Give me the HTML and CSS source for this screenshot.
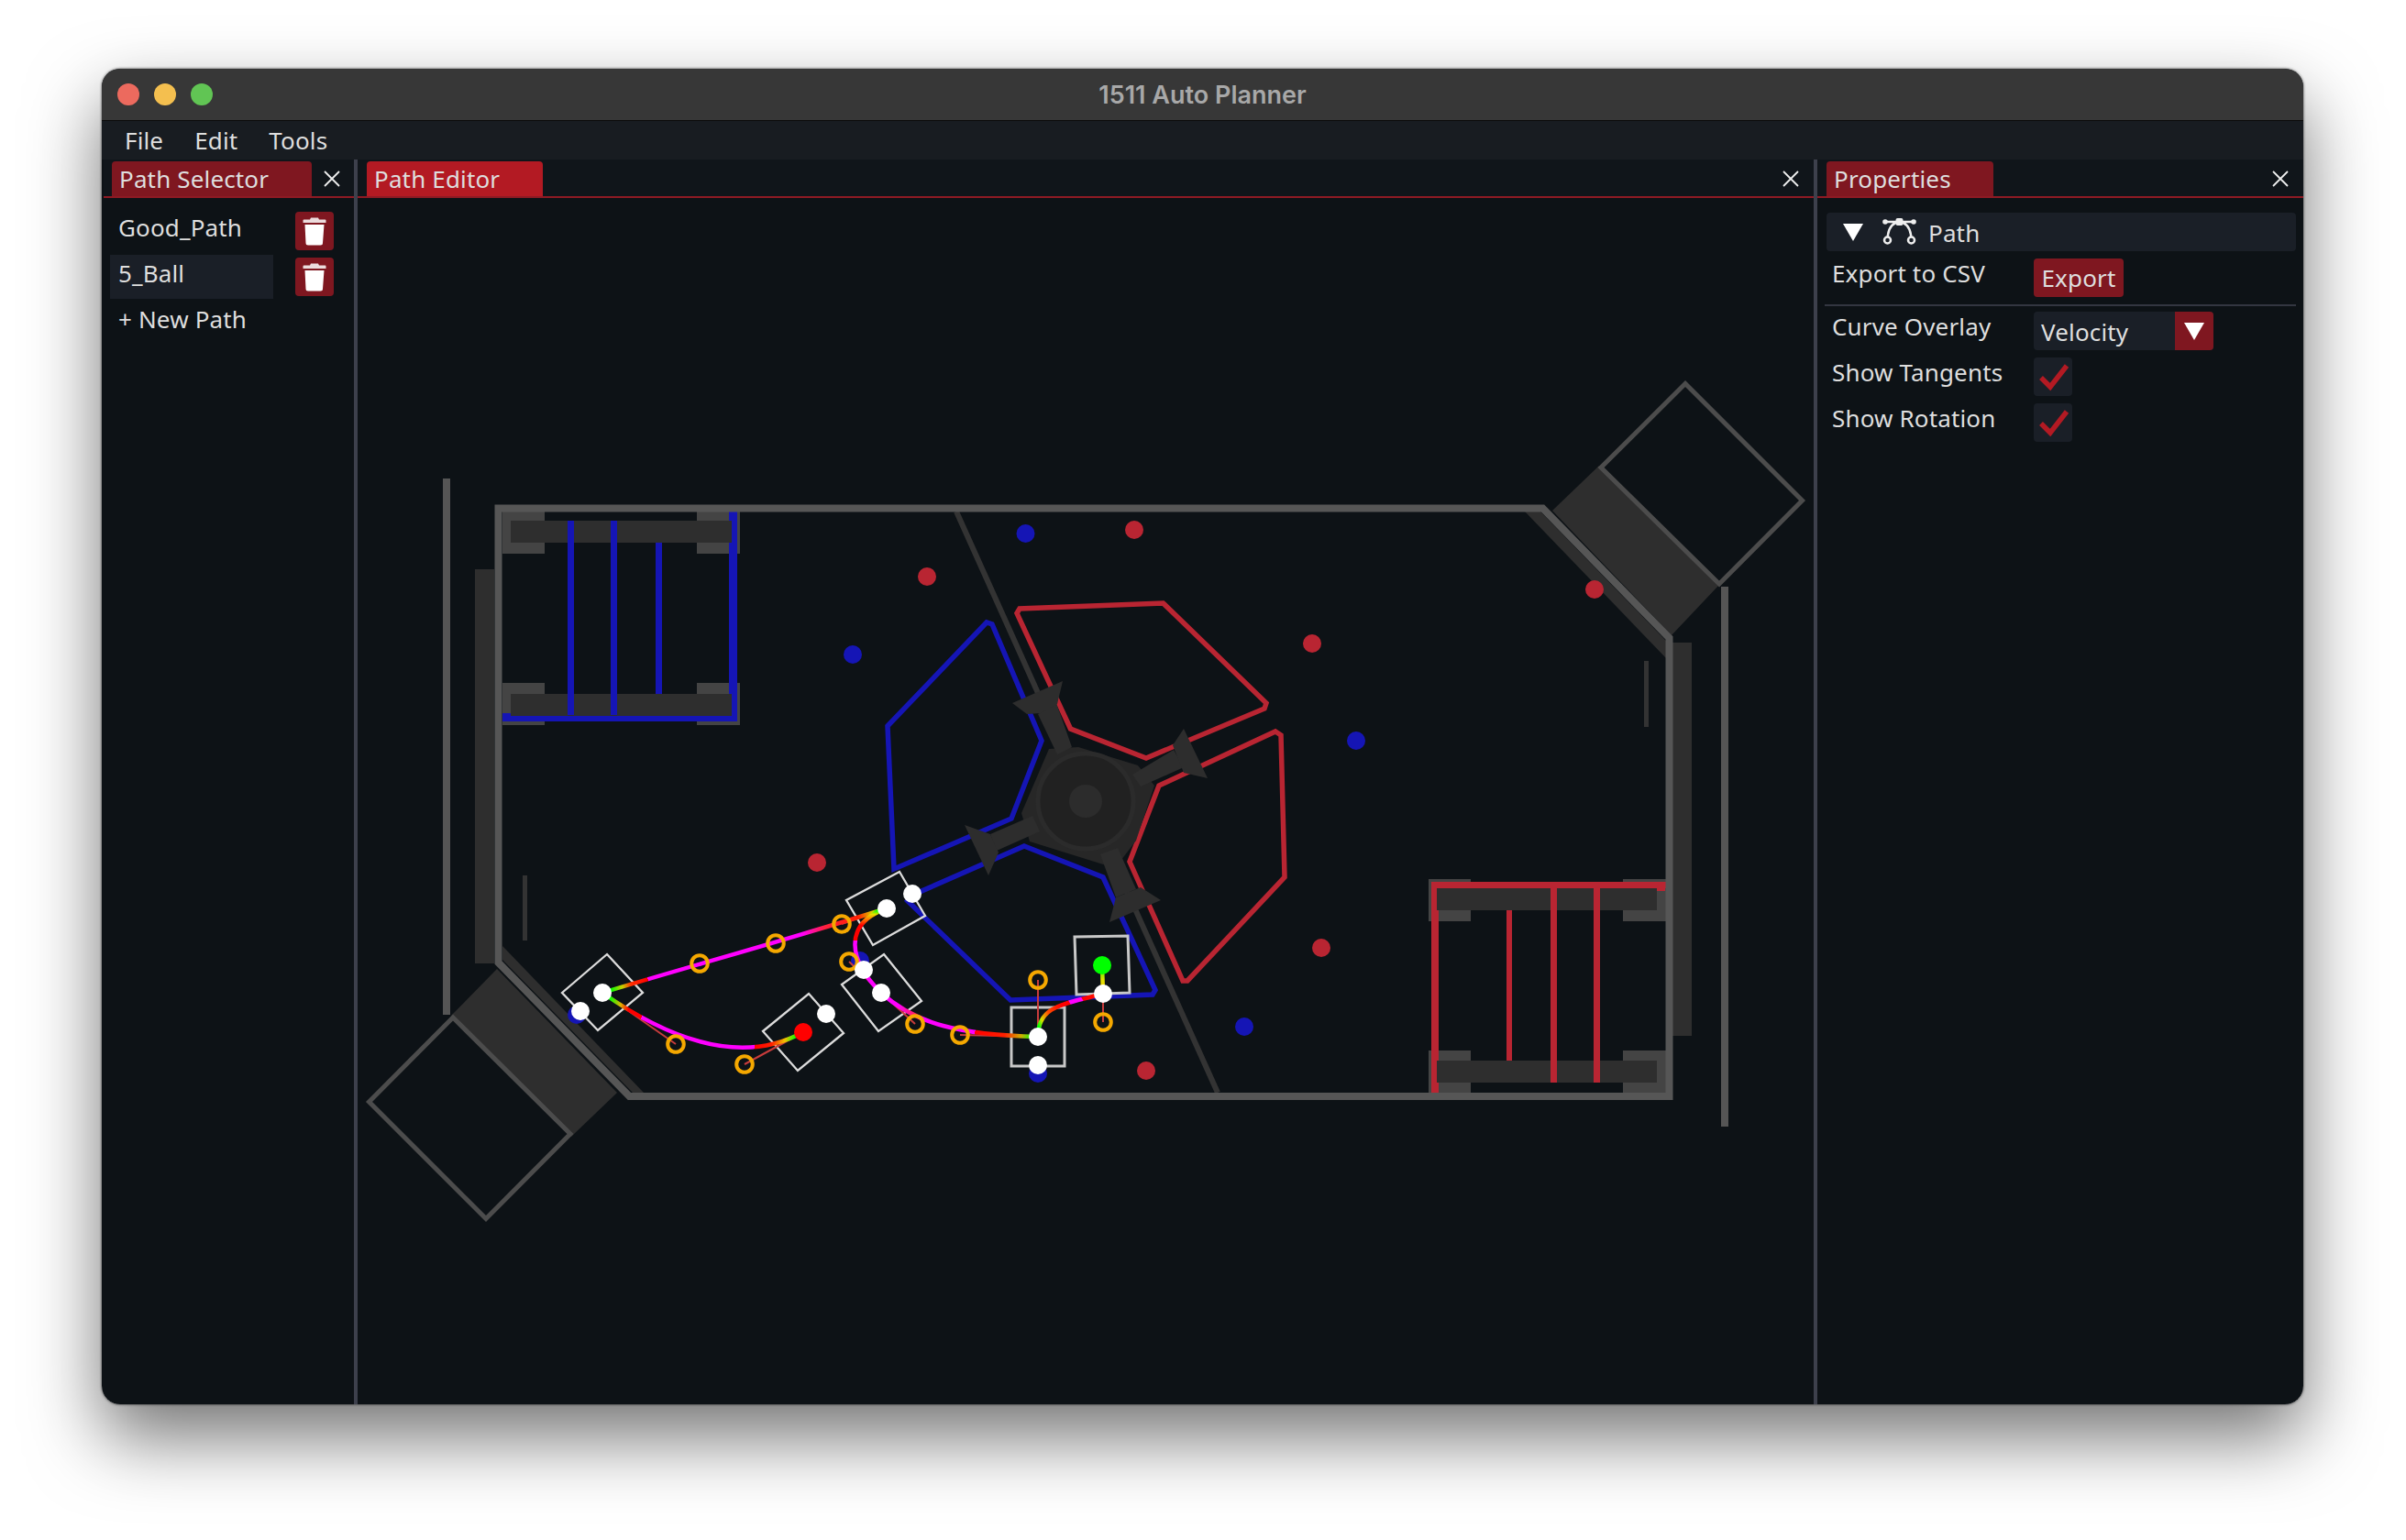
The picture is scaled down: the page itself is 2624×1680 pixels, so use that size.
FILE: index.html
```html
<!DOCTYPE html>
<html>
<head>
	<title>1511 Auto Planner</title>
	<link rel="stylesheet" href="styles.css">
</head>
<body>
<div class="window">
	<div class="titlebar">
		<span class="light light_red"></span>
		<span class="light light_yellow"></span>
		<span class="light light_green"></span>
		<span class="window_title">1511 Auto Planner</span>
	</div>
	<div class="menubar">
		<span class="menu_item">File</span>
		<span class="menu_item">Edit</span>
		<span class="menu_item">Tools</span>
	</div>
	<div class="dock">
		<div class="panel panel_left">
			<div class="tabbar tabbar_left">
				<div class="tab tab_dim tab_selector">Path Selector</div>
				<svg class="close" viewBox="0 0 18 18"><path d="M1 1L17 17M17 1L1 17"/></svg>
			</div>
			<div class="path_list">
				<div class="path_row">
					<div class="path_name">Good_Path</div>
					<button class="trash">
						<svg viewBox="0 0 26 32"><path class="trash_lid" d="M9 1.5h8l1 2h6.5a1 1 0 0 1 1 1v2.5h-25v-2.5a1 1 0 0 1 1-1h6.5z"/><path d="M2.5 9h21l-1.500 20a2.5 2.5 0 0 1-2.5 2.5h-13.5a2.5 2.5 0 0 1-2.5-2.5z"/></svg>
					</button>
				</div>
				<div class="path_row">
					<div class="path_name path_name_active">5_Ball</div>
					<button class="trash">
						<svg viewBox="0 0 26 32"><path class="trash_lid" d="M9 1.5h8l1 2h6.5a1 1 0 0 1 1 1v2.5h-25v-2.5a1 1 0 0 1 1-1h6.5z"/><path d="M2.5 9h21l-1.500 20a2.5 2.5 0 0 1-2.5 2.5h-13.5a2.5 2.5 0 0 1-2.5-2.5z"/></svg>
					</button>
				</div>
				<div class="path_row">
					<div class="path_name">+ New Path</div>
				</div>
			</div>
		</div>
		<div class="splitter"></div>
		<div class="panel panel_center">
			<div class="tabbar tabbar_center">
				<div class="tab tab_active tab_editor">Path Editor</div>
				<svg class="close" viewBox="0 0 18 18"><path d="M1 1L17 17M17 1L1 17"/></svg>
			</div>
			<svg class="field" viewBox="390 216 1588 1316" width="1588" height="1316">
				<defs>
					<linearGradient id="grad_a" gradientUnits="userSpaceOnUse" x1="657" y1="1083" x2="967" y2="991">
						<stop offset="0.03" stop-color="#00ff00"/><stop offset="0.07" stop-color="#c8d000"/><stop offset="0.10" stop-color="#ff3000"/><stop offset="0.16" stop-color="#ff0000"/><stop offset="0.16" stop-color="#ff00ff"/>
						<stop offset="0.70" stop-color="#ff00ff"/><stop offset="0.78" stop-color="#ff2040"/><stop offset="0.90" stop-color="#ff2000"/><stop offset="0.95" stop-color="#e0d000"/><stop offset="0.98" stop-color="#00ff00"/>
					</linearGradient>
					<linearGradient id="grad_b" gradientUnits="userSpaceOnUse" x1="657" y1="1083" x2="876" y2="1126">
						<stop offset="0.04" stop-color="#00ff00"/><stop offset="0.10" stop-color="#e0b000"/><stop offset="0.14" stop-color="#ff0000"/><stop offset="0.21" stop-color="#ff0000"/><stop offset="0.21" stop-color="#ff00ff"/>
						<stop offset="0.78" stop-color="#ff00ff"/><stop offset="0.78" stop-color="#ff0000"/><stop offset="0.86" stop-color="#ff2000"/><stop offset="0.92" stop-color="#f0c000"/><stop offset="0.97" stop-color="#00ff00"/>
					</linearGradient>
					<linearGradient id="grad_c" gradientUnits="userSpaceOnUse" x1="967" y1="991" x2="961" y2="1083">
						<stop offset="0.03" stop-color="#00ff00"/><stop offset="0.08" stop-color="#e8e000"/><stop offset="0.14" stop-color="#ff8000"/><stop offset="0.22" stop-color="#ff0000"/><stop offset="0.40" stop-color="#ff0000"/><stop offset="0.40" stop-color="#ff00ff"/>
						<stop offset="1" stop-color="#ff00ff"/>
					</linearGradient>
					<linearGradient id="grad_d" gradientUnits="userSpaceOnUse" x1="961" y1="1083" x2="1132" y2="1131">
						<stop offset="0.12" stop-color="#ff00ff"/><stop offset="0.24" stop-color="#ff2060"/><stop offset="0.30" stop-color="#ff00ff"/>
						<stop offset="0.62" stop-color="#ff00ff"/><stop offset="0.62" stop-color="#ff0000"/><stop offset="0.80" stop-color="#ff2000"/><stop offset="0.90" stop-color="#d0b000"/><stop offset="0.97" stop-color="#00ff00"/>
					</linearGradient>
					<linearGradient id="grad_e" gradientUnits="userSpaceOnUse" x1="1132" y1="1125" x2="1203" y2="1084">
						<stop offset="0.04" stop-color="#00ff00"/><stop offset="0.12" stop-color="#d8e000"/><stop offset="0.24" stop-color="#ff5000"/><stop offset="0.44" stop-color="#ff0000"/><stop offset="0.55" stop-color="#ff0000"/><stop offset="0.56" stop-color="#ff00ff"/>
						<stop offset="0.72" stop-color="#ff00ff"/><stop offset="0.73" stop-color="#ff0000"/><stop offset="0.90" stop-color="#ff1000"/><stop offset="1" stop-color="#f0c000"/>
					</linearGradient>
					<linearGradient id="grad_f" gradientUnits="userSpaceOnUse" x1="1203" y1="1084" x2="1202" y2="1053">
						<stop offset="0" stop-color="#ffd000"/><stop offset="0.5" stop-color="#e0e000"/><stop offset="1" stop-color="#00ff00"/>
					</linearGradient>
				</defs>

				<!-- field -->
				<g class="fill_dark">
					<rect x="518" y="621" width="21" height="430"/>
					<rect x="1824" y="701" width="21" height="429"/>
					<polygon points="1663,558 1680,558 1817,699 1817,718"/>
					<polygon points="548,1032 548,1047 690,1192 702,1192"/>
					<polygon points="1744,508 1875,638 1823,693 1693,557"/>
					<polygon points="542,1057 673,1192 623,1240 492,1108"/>
				</g>
				<g class="fill_wall">
					<rect x="483" y="522" width="8" height="585"/>
					<rect x="1877" y="640" width="8" height="589"/>
				</g>
				<g class="fill_thin">
					<rect x="1793" y="721" width="5" height="72"/>
					<rect x="570" y="955" width="5" height="71"/>
				</g>
				<polygon class="zone" points="1746,510 1838,418.5 1965.5,546 1875,637"/>
				<polygon class="zone" points="494,1110 402.5,1202 530,1329.5 622,1237"/>
				<line class="divider" x1="1043" y1="558" x2="1328" y2="1192"/>

				<!-- blue hangar -->
				<g class="fill_block">
					<rect x="548" y="558" width="46" height="46"/>
					<rect x="760" y="558" width="47" height="46"/>
					<rect x="548" y="745" width="46" height="46"/>
					<rect x="760" y="745" width="47" height="46"/>
				</g>
				<rect class="fill_blue" x="715" y="592" width="7" height="165"/>
				<rect class="fill_blue" x="795" y="558" width="9" height="229"/>
				<rect class="fill_blue" x="548" y="781" width="256" height="6"/>
				<rect class="fill_blue" x="548" y="778" width="9" height="9"/>
				<g class="fill_dark">
					<rect x="557" y="568" width="241" height="24"/>
					<rect x="557" y="757" width="241" height="24"/>
				</g>
				<rect class="fill_blue" x="619" y="568" width="7" height="212"/>
				<rect class="fill_blue" x="666" y="568" width="7" height="212"/>

				<!-- red hangar -->
				<g class="fill_block">
					<rect x="1558" y="959" width="46" height="46"/>
					<rect x="1770" y="959" width="47" height="46"/>
					<rect x="1558" y="1146" width="46" height="46"/>
					<rect x="1770" y="1146" width="47" height="46"/>
				</g>
				<rect class="fill_red" x="1643" y="993" width="6" height="164"/>
				<rect class="fill_red" x="1561" y="962" width="256" height="7"/>
				<rect class="fill_red" x="1561" y="962" width="8" height="230"/>
				<rect class="fill_red" x="1807" y="962" width="9" height="10"/>
				<g class="fill_dark">
					<rect x="1567" y="969" width="240" height="24"/>
					<rect x="1567" y="1157" width="240" height="24"/>
				</g>
				<rect class="fill_red" x="1691" y="969" width="7" height="212"/>
				<rect class="fill_red" x="1738" y="969" width="7" height="212"/>

				<!-- wall goes over the hangars -->
				<polygon class="wall" points="543.5,554.5 1682.5,554.5 1820.5,696 1820.5,1196 686.5,1196 543.5,1050"/>

				<!-- tarmacs -->
				<polygon class="tarmac_blue" points="968,792 1076,679 1082,681 1136,808 1103,893 975,948"/>
				<polygon class="tarmac_blue" points="1117,923 1203,957 1260,1080 1257,1085 1102,1091 990,983 1003,973"/>
				<polygon class="tarmac_red" points="1112,664 1109,669 1167.5,795 1250,827 1379,773 1381,767 1268.5,658"/>
				<polygon class="tarmac_red" points="1391,798 1397,802 1401,957 1295,1070 1290,1070 1232,940 1264,857"/>

				<!-- hub -->
				<polygon class="hub_back" points="1144,817 1176,815 1241,835 1259,857 1239,917 1216,947 1123,918 1114,887"/>
				<g class="fill_arm">
					<polygon points="1132,779 1152,767 1169,815 1153,823"/>
					<polygon points="1280,818 1291,837 1244,858 1235,845"/>
					<polygon points="1080,910 1087,928 1134,907 1126,890"/>
					<polygon points="1217,979 1239,970 1219,925 1200,932"/>
					<polygon points="1104,767 1159,743 1153,768 1135,778 1120,779"/>
					<polygon points="1291,795 1317,849 1291,843 1279,813"/>
					<polygon points="1052,900 1078,955 1089,930 1080,910"/>
					<polygon points="1210,1006 1266,982 1244,968 1217,979"/>
				</g>
				<circle class="hub_ring" cx="1184" cy="874" r="52"/>
				<circle class="hub_cap" cx="1184" cy="874" r="18"/>

				<!-- balls -->
				<g class="fill_blue">
					<circle cx="1118.5" cy="582" r="10"/>
					<circle cx="930" cy="714" r="10"/>
					<circle cx="1479" cy="808" r="10"/>
					<circle cx="1357" cy="1120" r="10"/>
					<circle cx="629" cy="1107" r="10"/>
					<circle cx="1132" cy="1171" r="10"/>
					<circle cx="938" cy="1048" r="10"/>
				</g>
				<g class="fill_red">
					<circle cx="1237" cy="578" r="10"/>
					<circle cx="1011" cy="629" r="10"/>
					<circle cx="1431" cy="702" r="10"/>
					<circle cx="891" cy="941" r="10"/>
					<circle cx="1739" cy="643" r="10"/>
					<circle cx="1250" cy="1168" r="10"/>
					<circle cx="1441" cy="1034" r="10"/>
				</g>

				<!-- robot outlines -->
				<g class="robot">
					<polygon points="662,1041 701,1083 652,1124 613,1083"/>
					<polygon points="882,1084 920,1127 870,1168 832,1125"/>
					<polygon points="981,951 1009,999 952,1031 923,982"/>
					<polygon points="964,1041 1005,1092 958,1125 918,1074"/>
					<polygon class="robot_thick" points="1103,1099 1161,1099 1161,1163 1103,1163"/>
					<polygon class="robot_thick" points="1172,1022 1230,1021 1232,1083 1174,1085"/>
				</g>

				<!-- tangents -->
				<g class="tangent">
					<line x1="657" y1="1083" x2="763" y2="1051"/>
					<line x1="657" y1="1083" x2="737" y2="1139"/>
					<line x1="876" y1="1126" x2="812" y2="1161"/>
					<line x1="967" y1="991" x2="918" y2="1008"/>
					<line x1="961" y1="1083" x2="926" y2="1049"/>
					<line x1="961" y1="1083" x2="998" y2="1117"/>
					<line x1="1132" y1="1131" x2="1047" y2="1129"/>
					<line x1="1132" y1="1131" x2="1132" y2="1069"/>
					<line x1="1203" y1="1084" x2="1203" y2="1115"/>
				</g>

				<!-- path -->
				<g class="curve">
					<path stroke="url(#grad_a)" d="M657 1083C763 1051 846 1029 967 991"/>
					<path stroke="url(#grad_b)" d="M657 1083C737 1139 812 1161 876 1126"/>
					<path stroke="url(#grad_c)" d="M967 991C918 1008 926 1049 961 1083"/>
					<path stroke="url(#grad_d)" d="M961 1083C998 1117 1047 1129 1132 1131"/>
					<path stroke="url(#grad_e)" d="M1132 1131C1132 1095 1165 1095 1203 1084"/>
					<path stroke="url(#grad_f)" d="M1203 1084L1202 1053"/>
				</g>

				<!-- control points -->
				<g class="handle">
					<circle cx="763" cy="1051" r="8.8"/>
					<circle cx="846" cy="1029" r="8.8"/>
					<circle cx="918" cy="1008" r="8.8"/>
					<circle cx="737" cy="1139" r="8.8"/>
					<circle cx="812" cy="1161" r="8.8"/>
					<circle cx="926" cy="1049" r="8.8"/>
					<circle cx="998" cy="1117" r="8.8"/>
					<circle cx="1047" cy="1129" r="8.8"/>
					<circle cx="1132" cy="1069" r="8.8"/>
					<circle cx="1203" cy="1115" r="8.8"/>
				</g>
				<g class="point">
					<circle cx="657" cy="1083" r="10"/>
					<circle cx="633" cy="1103" r="10"/>
					<circle cx="901" cy="1106" r="10"/>
					<circle cx="967" cy="991" r="10"/>
					<circle cx="995" cy="975" r="10"/>
					<circle cx="961" cy="1083" r="10"/>
					<circle cx="942" cy="1058" r="10"/>
					<circle cx="1132" cy="1131" r="10"/>
					<circle cx="1132" cy="1162" r="10"/>
					<circle cx="1203" cy="1084" r="10"/>
				</g>
				<circle class="point_start" cx="876" cy="1126" r="10"/>
				<circle class="point_end" cx="1202" cy="1053" r="10"/>
			</svg>
		</div>
		<div class="splitter"></div>
		<div class="panel panel_right">
			<div class="tabbar">
				<div class="tab tab_dim tab_properties">Properties</div>
				<svg class="close" viewBox="0 0 18 18"><path d="M1 1L17 17M17 1L1 17"/></svg>
			</div>
			<div class="props">
				<div class="prop_header">
					<svg class="arrow arrow_header" viewBox="0 0 22 19"><path d="M0 0H22L11 19z"/></svg>
					<svg class="bezier" viewBox="0 0 37 30">
						<path class="bezier_line" d="M3 5H34M18.5 5C10 6 6 13 5.5 24M18.5 5C27 6 31 13 31.5 24"/>
						<rect x="14.5" y="1" width="8" height="8" rx="2"/>
						<circle cx="3" cy="5" r="2.8"/>
						<circle cx="34" cy="5" r="2.8"/>
						<circle class="bezier_ring" cx="5.5" cy="25" r="3.5"/>
						<circle class="bezier_ring" cx="31.5" cy="25" r="3.5"/>
					</svg>
					<span class="prop_header_text">Path</span>
				</div>
				<div class="prop_row prop_row_export">
					<span class="prop_label">Export to CSV</span>
					<button class="export">Export</button>
				</div>
				<div class="separator"></div>
				<div class="prop_row">
					<span class="prop_label">Curve Overlay</span>
					<div class="combo">
						<span class="combo_text">Velocity</span>
						<span class="combo_button"><svg class="arrow" viewBox="0 0 22 19"><path d="M0 0H22L11 19z"/></svg></span>
					</div>
				</div>
				<div class="prop_row">
					<span class="prop_label">Show Tangents</span>
					<div class="checkbox"><svg viewBox="0 0 42 42"><path d="M8 22L18 32L36 9"/></svg></div>
				</div>
				<div class="prop_row">
					<span class="prop_label">Show Rotation</span>
					<div class="checkbox"><svg viewBox="0 0 42 42"><path d="M8 22L18 32L36 9"/></svg></div>
				</div>
			</div>
		</div>
	</div>
</div>
</body>
</html>
```

FILE: styles.css
```css
body {
	margin: 0;
	background-color: #fff;
	font-family: "Noto Sans", sans-serif;
	font-size: 26px;
	letter-spacing: 0.15px;
	color: #dedede;
}
.window {
	position: relative;
	box-sizing: border-box;
	margin: 75px 0 0 111px;
	width: 2401px;
	height: 1457px;
	border-radius: 20px;
	overflow: hidden;
	display: flex;
	flex-direction: column;
	background-color: #0d1216;
}
body::before {
	content: "";
	position: absolute;
	left: 111px;
	top: 75px;
	width: 2401px;
	height: 1457px;
	border-radius: 20px;
	box-shadow: 0 36px 80px rgba(0, 0, 0, 0.55), 0 0 3px rgba(0, 0, 0, 0.7);
}
.titlebar {
	box-sizing: border-box;
	height: 57px;
	flex: none;
	display: flex;
	align-items: center;
	gap: 16px;
	padding-left: 17px;
	background-color: #373737;
	border-bottom: 1px solid #0a0a0a;
	position: relative;
}
.light {
	width: 24px;
	height: 24px;
	border-radius: 50%;
}
.light_red {
	background-color: #ec6a5e;
}
.light_yellow {
	background-color: #f4bf4f;
}
.light_green {
	background-color: #61c554;
}
.window_title {
	position: absolute;
	left: 0;
	right: 0;
	text-align: center;
	font-family: "Inter", sans-serif;
	font-weight: 600;
	font-size: 27px;
	letter-spacing: 0;
	color: #a8a8a8;
	margin-left: 0;
}
.menubar {
	height: 42px;
	flex: none;
	display: flex;
	align-items: center;
	padding-left: 25px;
	gap: 34px;
	background-color: #181c21;
}
.dock {
	flex: 1;
	display: flex;
	min-height: 0;
}
.panel {
	display: flex;
	flex-direction: column;
	min-width: 0;
}
.panel_left {
	width: 275px;
}
.panel_center {
	width: 1588px;
}
.panel_right {
	width: 530px;
}
.splitter {
	width: 4px;
	flex: none;
	background-color: #3d404c;
}
.tabbar {
	box-sizing: border-box;
	height: 42px;
	flex: none;
	display: flex;
	align-items: flex-end;
	justify-content: space-between;
	padding: 0 16px 0 10px;
	background-color: #10151a;
	border-bottom: 2px solid #8e1a24;
}
.tabbar_left {
	margin-left: 2px;
	padding-left: 9px;
	padding-right: 15px;
}
.tab {
	box-sizing: border-box;
	height: 38px;
	padding: 0 0 0 8px;
	line-height: 38px;
	border-radius: 4px 4px 0 0;
	white-space: nowrap;
}
.tab_dim {
	background-color: #7f1720;
}
.tab_active {
	background-color: #b31a23;
}
.tab_selector {
	width: 218px;
}
.tab_editor {
	width: 192px;
}
.tab_properties {
	width: 182px;
}
.close {
	width: 18px;
	height: 18px;
	margin-bottom: 10px;
}
.close path {
	stroke: #eee;
	stroke-width: 1.8;
	fill: none;
}
.path_list {
	padding: 12px 0 0 9px;
	display: flex;
	flex-direction: column;
	gap: 2px;
}
.path_row {
	display: flex;
	align-items: center;
	height: 48px;
	gap: 24px;
}
.path_name {
	box-sizing: border-box;
	width: 178px;
	height: 48px;
	padding-left: 9px;
	line-height: 40px;
	white-space: nowrap;
}
.path_name_active {
	background-color: #1a1f27;
}
.trash {
	width: 42px;
	height: 42px;
	padding: 0;
	border: none;
	border-radius: 4px;
	background-color: #7f1720;
	display: flex;
	align-items: center;
	justify-content: center;
}
.trash svg {
	width: 26px;
	height: 32px;
	fill: #fff;
}
.trash_lid {
	opacity: 0.85;
}
.field {
	display: block;
	flex: none;
}
.fill_dark {
	fill: #2e2e2e;
}
.fill_wall {
	fill: #555;
}
.fill_thin {
	fill: #333;
}
.fill_block {
	fill: #444;
}
.fill_blue {
	fill: #1515b5;
}
.fill_red {
	fill: #b92532;
}
.fill_arm {
	fill: #2d2d2d;
}
.zone {
	fill: none;
	stroke: #4c4c4c;
	stroke-width: 5;
}
.divider {
	stroke: #333;
	stroke-width: 6;
}
.wall {
	fill: none;
	stroke: #565656;
	stroke-width: 8;
}
.tarmac_blue {
	fill: none;
	stroke: #1515b5;
	stroke-width: 5.5;
}
.tarmac_red {
	fill: none;
	stroke: #b92532;
	stroke-width: 5.5;
}
.hub_back {
	fill: #272727;
}
.hub_ring {
	fill: #212121;
	stroke: #2b2b2b;
	stroke-width: 5;
}
.hub_cap {
	fill: #2c2c2c;
}
.robot {
	fill: none;
	stroke: #dcdcdc;
	stroke-width: 2.3;
}
.robot_thick {
	stroke-width: 3;
	stroke: #c8c8c8;
}
.tangent {
	stroke: #c83c3c;
	stroke-width: 2;
}
.curve {
	fill: none;
	stroke-width: 4.5;
}
.handle {
	fill: none;
	stroke: #f5a800;
	stroke-width: 4;
}
.point {
	fill: #fff;
}
.point_start {
	fill: #ff0000;
}
.point_end {
	fill: #00ff00;
}
.props {
	padding: 16px 8px 0 10px;
}
.prop_header {
	height: 42px;
	display: flex;
	align-items: center;
	border-radius: 4px;
	background-color: #1a1f27;
}
.arrow {
	display: block;
	width: 22px;
	height: 19px;
	fill: #fff;
}
.arrow_header {
	margin-left: 18px;
}
.bezier {
	width: 37px;
	height: 30px;
	margin: -3px 0 0 21px;
	fill: #eee;
}
.bezier_line {
	fill: none;
	stroke: #eee;
	stroke-width: 2.5;
}
.bezier_ring {
	fill: #1a1f27;
	stroke: #eee;
	stroke-width: 2.5;
}
.prop_header_text {
	margin: 1px 0 0 13px;
}
.prop_row {
	height: 42px;
	margin-top: 8px;
	display: flex;
}
.prop_row_export {
	margin-bottom: 8px;
}
.prop_label {
	width: 226px;
	flex: none;
	padding-left: 6px;
	box-sizing: border-box;
	line-height: 33px;
	white-space: nowrap;
}
.export {
	width: 98px;
	height: 42px;
	padding: 0;
	border: none;
	border-radius: 4px;
	background-color: #7f1720;
	color: #dedede;
	font-family: inherit;
	font-size: inherit;
	letter-spacing: inherit;
	line-height: 42px;
}
.separator {
	height: 2px;
	background-color: #333641;
	margin-left: -2px;
	margin-bottom: -2px;
}
.combo {
	width: 196px;
	height: 42px;
	display: flex;
	justify-content: space-between;
	border-radius: 4px;
	background-color: #1a1f27;
	overflow: hidden;
}
.combo_text {
	padding-left: 8px;
	line-height: 44px;
}
.combo_button {
	width: 42px;
	display: flex;
	align-items: center;
	justify-content: center;
	background-color: #7f1720;
}
.checkbox {
	width: 42px;
	height: 42px;
	border-radius: 4px;
	background-color: #1a1f27;
}
.checkbox svg {
	display: block;
}
.checkbox path {
	fill: none;
	stroke: #b31a23;
	stroke-width: 5.5;
}
.menu_item {
	line-height: 43px;
}
```
